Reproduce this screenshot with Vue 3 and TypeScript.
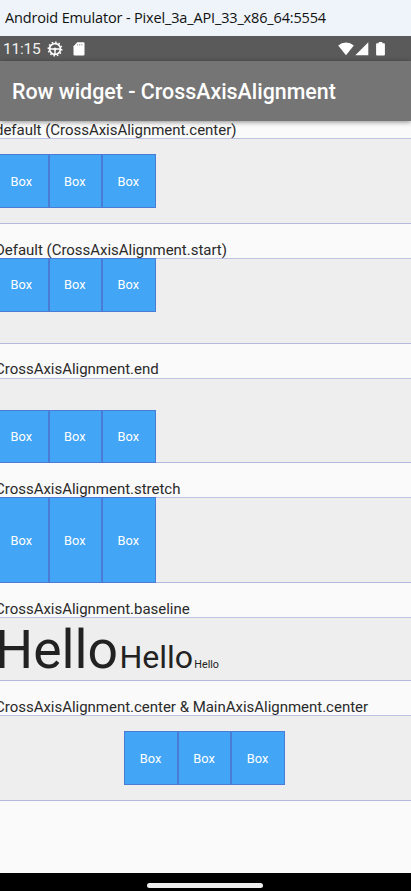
<script setup lang="ts">
interface Section {
  label: string
  align: 'center' | 'start' | 'end' | 'stretch' | 'baseline'
  centered?: boolean
}

const sections: Section[] = [
  { label: 'default (CrossAxisAlignment.center)', align: 'center' },
  { label: 'Default (CrossAxisAlignment.start)', align: 'start' },
  { label: 'CrossAxisAlignment.end', align: 'end' },
  { label: 'CrossAxisAlignment.stretch', align: 'stretch' },
  { label: 'CrossAxisAlignment.baseline', align: 'baseline' },
  { label: 'CrossAxisAlignment.center & MainAxisAlignment.center', align: 'center', centered: true },
]
</script>

<template>
  <div class="screen">
    <div class="window-title"><span>Android Emulator - Pixel_3a_API_33_x86_64:5554</span></div>
    <div class="status">
      <span class="time">11:15</span>
      <svg class="gear" width="16" height="16" viewBox="0 0 16 16" fill="none" stroke="#fff">
        <circle cx="8" cy="8" r="5.4" stroke-width="1.7" />
        <circle cx="8" cy="8" r="6.7" stroke-width="1.5" stroke-dasharray="1.6 1.9" />
        <path d="M3 8h10M8 8v5" stroke-width="1.4" />
        <circle cx="8" cy="8" r="1.5" fill="#fff" stroke="none" />
      </svg>
      <svg class="card" width="12" height="14" viewBox="0 0 12 14">
        <path d="M4.3 .3H10.4Q11.5 .3 11.5 1.4V12.4Q11.5 13.5 10.4 13.5H1.6Q.5 13.5 .5 12.4V4.2Z" fill="#fff" />
        <path d="M4.6 2v1.6M6.7 2v1.6M8.8 2v1.6" stroke="#999" stroke-width=".9" />
      </svg>
      <svg class="wifi" width="16" height="14" viewBox="0 0 16 14">
        <path d="M8 13.2L.2 3.4Q3.5.5 8 .5T15.8 3.4Z" fill="#fff" />
      </svg>
      <svg class="signal" width="14" height="14" viewBox="0 0 14 14">
        <path d="M13.3.3V13.3H.3Z" fill="#fff" />
      </svg>
      <svg class="battery" width="9" height="14" viewBox="0 0 9 14">
        <path d="M2.7 0H6.3V1.3H8Q8.9 1.3 8.9 2.2V12.6Q8.9 13.5 8 13.5H1Q.1 13.5 .1 12.6V2.2Q.1 1.3 1 1.3H2.7Z" fill="#fff" />
      </svg>
    </div>
    <header class="app-bar">Row widget - CrossAxisAlignment</header>
    <main class="body">
      <section v-for="s in sections" :key="s.label" class="section">
        <div class="label">{{ s.label }}</div>
        <div class="panel" :class="[s.align, { centered: s.centered }]">
          <template v-if="s.align === 'baseline'">
            <span class="hello large">Hello</span>
            <span class="hello medium">Hello</span>
            <span class="hello small">Hello</span>
          </template>
          <template v-else>
            <div v-for="n in 3" :key="n" class="box">Box</div>
          </template>
        </div>
      </section>
    </main>
    <footer class="nav"><div class="handle"></div></footer>
  </div>
</template>

<style>
body {
  margin: 0;
  overflow: hidden;
}
</style>

<style scoped>
.screen {
  display: flex;
  flex-direction: column;
  width: 411px;
  height: 891px;
  overflow: hidden;
  background: #fafafa;
  font-family: Roboto, sans-serif;
  white-space: nowrap;
}
.window-title {
  flex: none;
  box-sizing: border-box;
  height: 36px;
  padding-left: 5px;
  background: #eef4f9;
  color: #111;
  font: 14.5px/36px "Open Sans", sans-serif;
  letter-spacing: -0.155px;
}
.status {
  flex: none;
  display: flex;
  align-items: center;
  box-sizing: border-box;
  height: 25px;
  padding: 0 26px 0 3px;
  background: #5a5a5a;
  color: #f2f2f2;
}
.status svg {
  flex: none;
}
.time {
  width: 44px;
  font-size: 15.5px;
  line-height: 26px;
  letter-spacing: -0.2px;
}
.card {
  margin-left: 10px;
}
.wifi {
  margin-left: auto;
}
.signal {
  margin-left: 1px;
}
.battery {
  margin-left: 7px;
}
.app-bar {
  flex: none;
  position: relative;
  z-index: 1;
  box-sizing: border-box;
  height: 60px;
  padding-left: 12px;
  background: #757575;
  box-shadow: 0 1px 5px rgba(0, 0, 0, 0.45);
  color: #fff;
  font-size: 21.4px;
  font-weight: 500;
  line-height: 62px;
}
.body {
  flex: 1;
  min-height: 0;
  margin-left: -5px;
}
.section {
  margin-bottom: 16.7px;
}
.label {
  height: 17.4px;
  color: #2a2a2a;
  font-size: 15px;
  line-height: 18px;
  letter-spacing: -0.02px;
}
.panel {
  display: flex;
  box-sizing: border-box;
  height: 85.6px;
  border-top: 1px solid #bfc3e2;
  border-bottom: 1px solid #b4b9de;
  background: #eee;
}
.panel.center {
  align-items: center;
}
.panel.start {
  align-items: flex-start;
}
.panel.end {
  align-items: flex-end;
}
.panel.stretch {
  align-items: stretch;
}
.panel.baseline {
  align-items: baseline;
  height: 64.2px;
}
.panel.centered {
  justify-content: center;
  padding-left: 3px;
}
.box {
  display: flex;
  align-items: center;
  justify-content: center;
  box-sizing: border-box;
  width: 53.5px;
  min-height: 53.5px;
  padding-right: 1px;
  border: 1px solid #4b7cd5;
  background: #42a5f5;
  color: #fff;
  font-size: 12.8px;
}
.panel.start .box {
  margin-top: -1px;
}
.panel.end .box {
  margin-bottom: -1px;
}
.panel.stretch .box {
  margin: -1px 0;
}
.hello {
  color: #222;
}
.large {
  margin-right: 1.3px;
  font-size: 53.5px;
}
.medium {
  margin-right: 1.2px;
  font-size: 32.1px;
}
.small {
  font-size: 10.7px;
}
.nav {
  flex: none;
  display: flex;
  justify-content: center;
  box-sizing: border-box;
  height: 18px;
  padding-top: 10px;
  padding-right: 2px;
  background: #000;
}
.handle {
  width: 116px;
  height: 5px;
  border-radius: 3px;
  background: #eee;
}
</style>
